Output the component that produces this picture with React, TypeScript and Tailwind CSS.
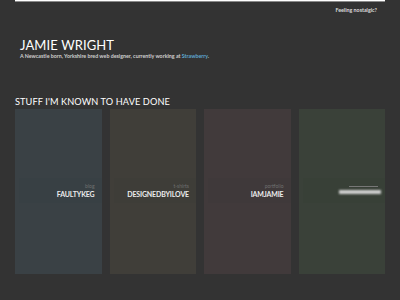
import React from "react";

const projects = [
  { tag: "blog", name: "FAULTYKEG", bg: "bg-[#3a4145]", band: "bg-[#384044]" },
  { tag: "t-shirts", name: "DESIGNEDBYILOVE", bg: "bg-[#403e39]", band: "bg-[#3e3d38]" },
  { tag: "portfolio", name: "IAMJAMIE", bg: "bg-[#413a3b]", band: "bg-[#3f393a]" },
];

function Card({ tag, name, bg, band }: { tag: string; name: string; bg: string; band: string }) {
  return (
    <div className={`${bg} h-[165px] flex flex-col pt-[69px]`}>
      <div className={`${band} ml-[4px] h-[25px] flex flex-col items-end pt-[6px] pr-[7px]`}>
        <span className="text-[5px] leading-[5px] text-[#6f7070]">{tag}</span>
        <span className="text-[7px] leading-[8px] mt-[1px] font-bold text-[#ececec] tracking-[-0.15px]">{name}</span>
      </div>
    </div>
  );
}

function App() {
  return (
    <div className="w-[400px] h-[300px] bg-[#333333] font-['Lato',sans-serif] overflow-hidden">
      <div className="mx-[15px]">
        {/* top bar */}
        <div className="h-[2px] bg-white border-b border-[#8a8a8a]" />
        <div className="flex justify-end pr-[8px] pt-[5px]">
          <span className="text-[5.3px] font-bold text-[#dddddd]">Feeling nostalgic?</span>
        </div>

        <div className="pl-[5px] pt-[23px]">
          <h1 className="text-[13px] leading-[14px] text-white tracking-[0.1px]">JAMIE WRIGHT</h1>
          <p className="text-[5.3px] leading-[7px] font-bold text-[#cfcfcf] mt-[1px]">
            A Newcastle born, Yorkshire bred web designer, currently working at{" "}
            <span className="text-[#5fa8cf]">Strawberry</span>.
          </p>
        </div>

        <h2 className="text-[9.2px] leading-[10px] text-white mt-[37px] tracking-[0.1px]">
          STUFF I'M KNOWN TO HAVE DONE
        </h2>

        <div className="grid grid-cols-4 gap-x-[8px] mt-[2px]">
          {projects.map((p) => (
            <Card key={p.name} {...p} />
          ))}
          {/* blurred card */}
          <div className="bg-[#3a4139] h-[165px] flex flex-col pt-[69px]">
            <div className="bg-[#384037] ml-[4px] h-[25px] flex flex-col items-end pt-[8px] pr-[4px] gap-[3px]">
              <div className="w-[29px] h-[1.5px] bg-[#777] blur-[0.6px] mr-[3px]" />
              <div className="w-[42px] h-[4px] bg-[#d0d0d0] blur-[1px]" />
            </div>
          </div>
        </div>
      </div>
    </div>
  );
}

export default App;
